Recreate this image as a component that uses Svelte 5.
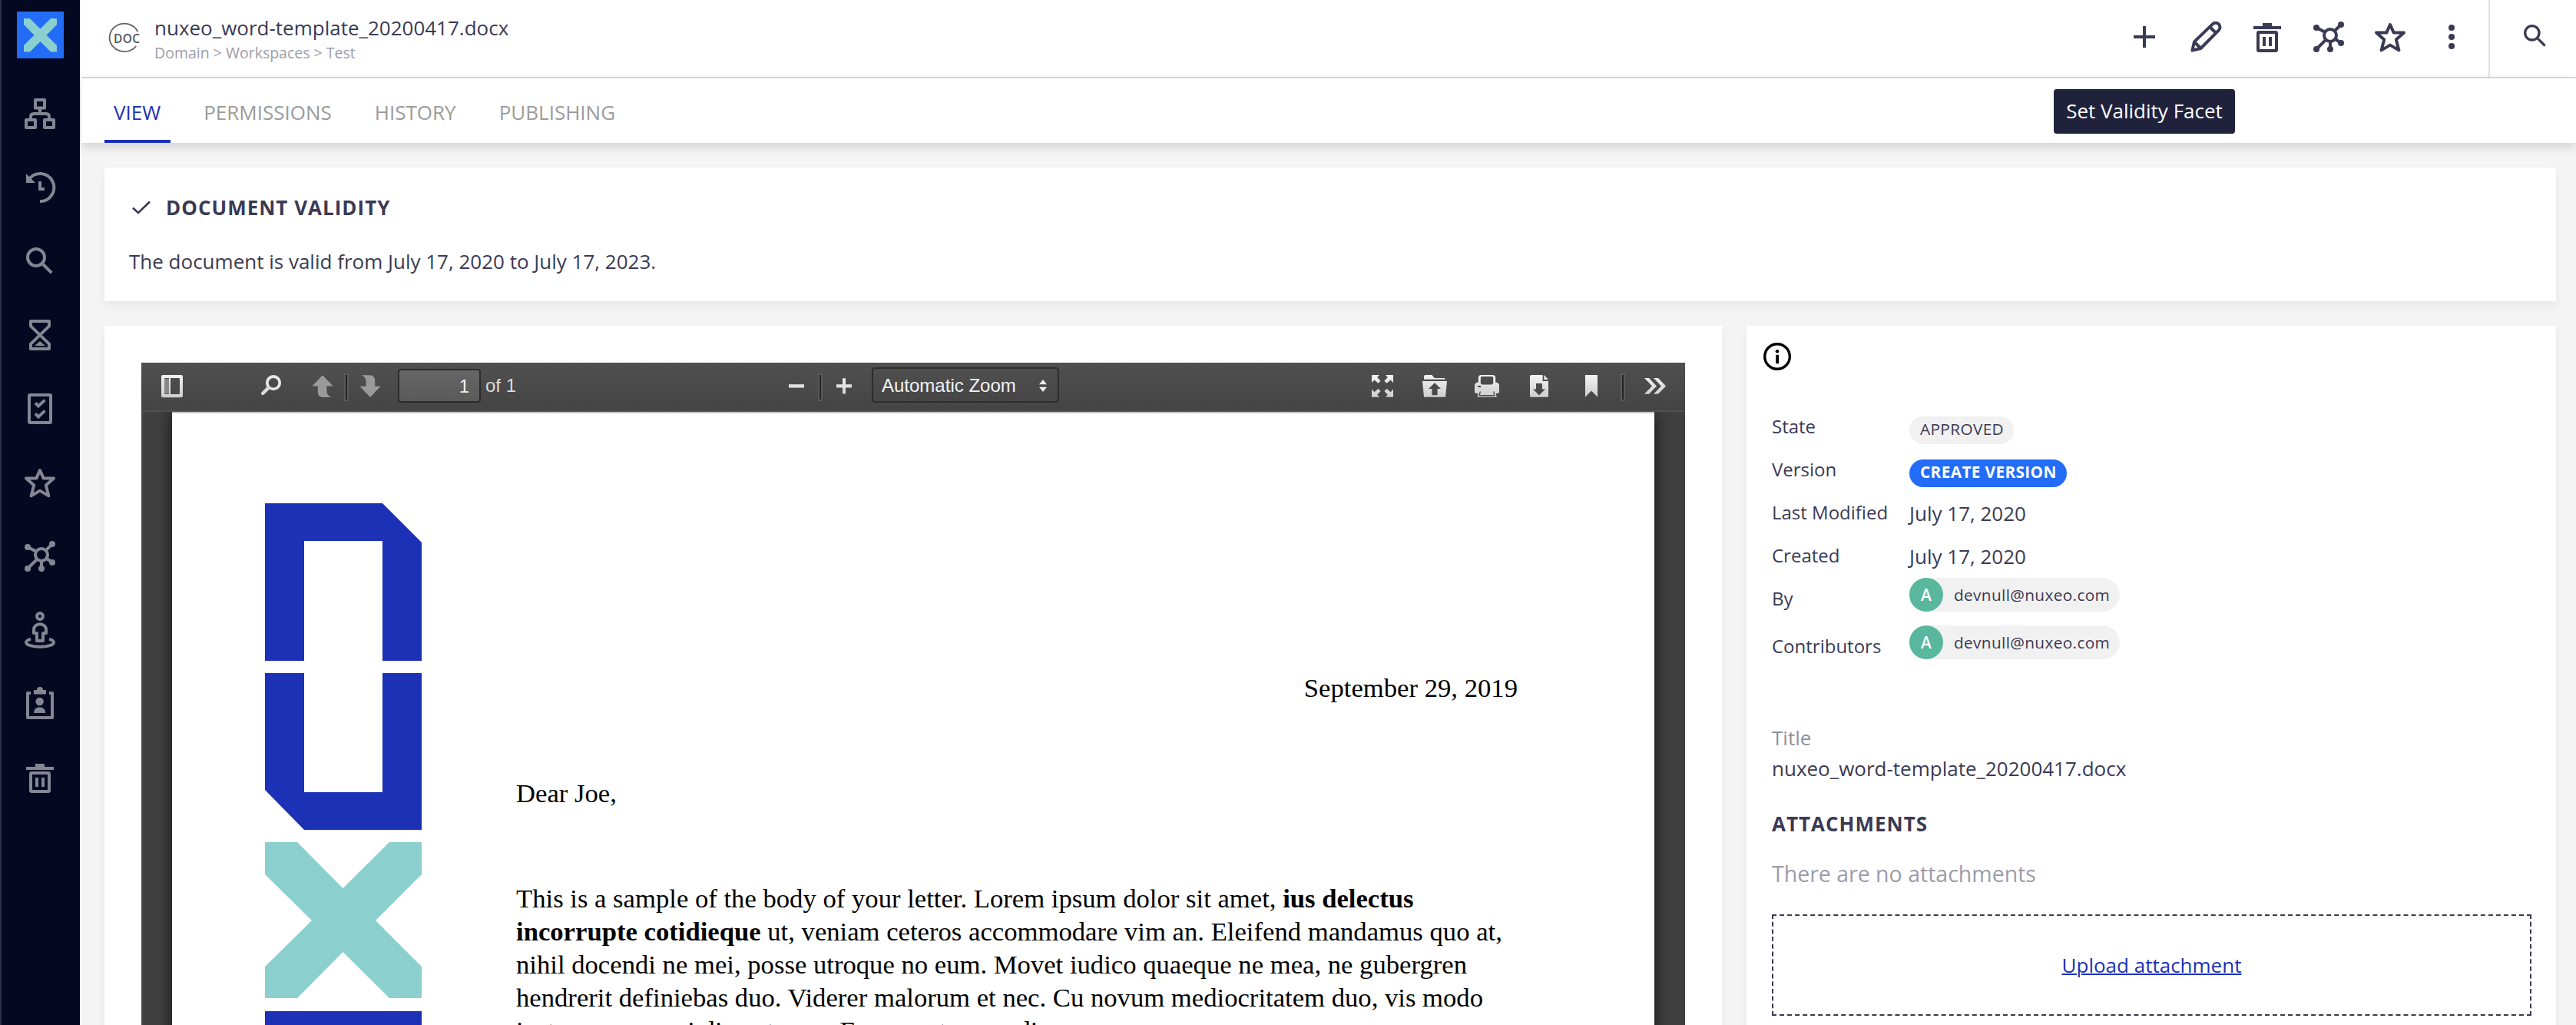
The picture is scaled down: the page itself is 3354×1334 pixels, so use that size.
<script>
  const navIcons = ['tree', 'history', 'search', 'hourglass', 'tasks', 'star', 'hub', 'person', 'badge', 'trash'];
  const actions = ['plus', 'pencil', 'trash', 'hub', 'star', 'dots'];
  const tabs = ['View', 'Permissions', 'History', 'Publishing'];
  const viewerActions = ['fullscreen', 'open', 'print', 'download', 'bookmark'];
</script>

{#snippet icon(name)}
  <svg class="icon" viewBox="0 0 24 24" fill="none" stroke="currentColor" stroke-width="2">
    {#if name === 'tree'}
      <path d="M9 3h6v5.2H9zM3 16h6v5H3zM15 16h6v5h-6zM12 8.5V12M6 16v-2q0-2 2-2h8q2 0 2 2v2" stroke-linejoin="round" />
    {:else if name === 'history'}
      <path d="M5 6.5A9 9 0 1 1 12 21M12 8v5h3" />
      <path d="M3 3v6h6z" fill="currentColor" stroke="none" />
    {:else if name === 'search'}
      <circle cx="9.5" cy="9.5" r="5.5" />
      <path d="M14 14l5.600 5.600" />
    {:else if name === 'hourglass'}
      <path d="M6 3h12v3.200L6 17.800V21h12v-3.200L6 6.200z" stroke-linejoin="round" />
      <path d="M8.500 19h7L12 16z" fill="currentColor" stroke="none" />
    {:else if name === 'tasks'}
      <rect x="5" y="3" width="14" height="18" rx="0.6" />
      <path d="M9 8.200l2 2 4.200-3.900M9 15.200l2 2 4.200-3.900" />
    {:else if name === 'star'}
      <path d="M12 4l2.300 5.200H21l-5.100 4.500 1.800 7L12 17.300l-5.700 3.400 1.800-7L3 9.200h6.700z" stroke-linejoin="round" />
    {:else if name === 'hub'}
      <circle cx="13" cy="11" r="4" />
      <path d="M4 6l5.500 2.800M20 4l-4.200 4.200M4 20l6.200-6.200M13 20v-5M20 16l-3.600-2.500" />
      <g fill="currentColor" stroke="none">
        <circle cx="4" cy="6" r="2" /><circle cx="20" cy="4" r="2" /><circle cx="4" cy="20" r="2" />
        <circle cx="13" cy="20" r="2" /><circle cx="20" cy="16" r="2" />
      </g>
    {:else if name === 'person'}
      <circle cx="12" cy="3" r="2" />
      <path d="M8 14v-2.300a4 3.600 0 0 1 8 0V14h-2v5h-4v-5z" stroke-linejoin="round" />
      <path d="M6 17.800C4 18.400 3 19.200 3 20c0 1.700 4 2.900 9 2.900s9-1.200 9-2.900c0-.8-1-1.600-3-2.200" />
    {:else if name === 'badge'}
      <path d="M6 5H4v16h16V5h-2" stroke-linejoin="round" />
      <g fill="currentColor" stroke="none">
        <path d="M8 5.800V3h2a2 2 0 0 1 4 0h2v2.800z" />
        <circle cx="11.800" cy="10.500" r="2.600" />
        <path d="M8 18c0-2.600 1.500-3.800 3.800-3.800s3.800 1.200 3.800 3.800z" />
      </g>
    {:else if name === 'trash'}
      <rect x="6" y="9" width="12" height="12" rx="0.600" />
      <path d="M3 6h18M9 4h6M10 12v6M14 12v6" />
    {:else if name === 'plus'}
      <path d="M12 5v14M5 12h14" />
    {:else if name === 'pencil'}
      <path d="M3.200 20.800l1.300-5.600L16.400 3.700a2.800 2.800 0 0 1 4 0 2.800 2.800 0 0 1 0 4L8.700 19.500zM14.600 5.500l4 4M4.500 15.200l4.200 4.300" stroke-linejoin="round" />
    {:else if name === 'dots'}
      <g fill="currentColor" stroke="none">
        <circle cx="12" cy="6" r="2" /><circle cx="12" cy="12" r="2" /><circle cx="12" cy="18" r="2" />
      </g>
    {/if}
  </svg>
{/snippet}

{#snippet tool(name)}
  <span class="tool">
    <svg viewBox="0 0 16 16" fill="url(#metal)">
      {#if name === 'sidebar'}
        <path fill-rule="evenodd" d="M2 .5h12q1 0 1 1v12.600q0 1-1 1H2q-1 0-1-1V1.500q0-1 1-1zM3.600 2.500q-.6 0-.6.6v9.300q0 .6.6.6h8.800q.6 0 .6-.6V3.100q0-.6-.6-.6z" />
        <path d="M3 3h3v9.700H3z" fill="#888" />
        <path d="M6 2.500h1v10.500H6z" />
      {:else if name === 'find'}
        <circle cx="9.500" cy="5.600" r="4.100" fill="none" stroke="#e6e6e6" stroke-width="1.900" />
        <path d="M6.300 8.800L2.600 12.500" stroke="#dcdcdc" stroke-width="2.200" stroke-linecap="round" />
      {:else if name === 'up' || name === 'down'}
        <path class:flip={name === 'down'} fill="#9a9a9a" d="M8 .6l6.800 7.100h-4.100v2.800c0 2.500 1.100 3.800 3.300 4.500H8.500c-2.700 0-3.600-1.400-3.600-4V7.700H1.200z" />
      {:else if name === 'minus'}
        <path d="M3 6.600h10v2.200H3z" />
      {:else if name === 'plus'}
        <path d="M7 2.600h2v4h4v2.200H9v4H7v-4H3V6.600h4z" />
      {:else if name === 'fullscreen'}
        <path d="M1 .5h5L4.600 2l2.200 2.400-1.600 1.500L2.700 3.800 1 5.600zM15 .5h-5L11.400 2 9.200 4.400l1.600 1.500 2.500-2.100L15 5.600zM1 14.900h5l-1.400-1.500L6.800 11 5.200 9.500l-2.500 2.100L1 9.800zM15 14.900h-5l1.400-1.500L9.200 11l1.600-1.500 2.500 2.100L15 9.800z" />
      {:else if name === 'open'}
        <path fill-rule="evenodd" d="M1 3.400V1.500q0-1 1-1h4.200l1.600 2H14q1 0 1 .9zM0 4.500h16l-1 10.400H1zM8 5.600L4 9.500h2.200v3.600q0 .5.500.5h2.600q.5 0 .5-.5V9.500H12z" />
      {:else if name === 'print'}
        <path fill-rule="evenodd" d="M2.400 5.200V2.500q0-2 2-2h7.200q2 0 2 2v2.700q2.400.2 2.400 2.300v4q0 1-1 1h-1.200l.6 2.400H1.700l.6-2.400H1q-1 0-1-1v-4q0-2.100 2.400-2.300zM4.800 1.500q-.9 0-.9.900v3.200q0 1.200 1.200 1.200h5.800q1.200 0 1.200-1.200V2.400q0-.9-.9-.9zM2 7.500v1h2v-1zM3.300 11.200l-.6 3h10.600l-.6-3-.7 0 .5 2.300H3.500l.5-2.300z" />
      {:else if name === 'download'}
        <path fill-rule="evenodd" d="M3 .5h7.300v4H14v9.600q0 .8-.8.800H2.800q-.8 0-.8-.8V1.500q0-1 1-1zM6 6v3.700H4l4 4 4-4h-2V6.500q0-.5-.5-.5z" />
        <path d="M11.200.5L14 3.500h-2.800z" />
      {:else if name === 'bookmark'}
        <path d="M4 .5h8v14.400l-4-4.100-4 4.100z" />
      {:else if name === 'more'}
        <path d="M1 2.500h3l5 5.200-5 5.200H1l5-5.200zM7 2.500h3l5 5.200-5 5.200H7l5-5.200z" />
      {/if}
    </svg>
  </span>
{/snippet}

{#snippet user()}
  <span class="user"><b>A</b><span>devnull@nuxeo.com</span></span>
{/snippet}

<svg class="defs" aria-hidden="true">
  <linearGradient id="metal" gradientUnits="userSpaceOnUse" x1="0" y1="0" x2="0" y2="16">
    <stop offset="0" stop-color="#f4f4f4" />
    <stop offset="1" stop-color="#cbcbcb" />
  </linearGradient>
</svg>

<div class="app">
  <nav>
    <div class="brand">
      <svg viewBox="0 0 61 61">
        <rect width="61" height="61" rx="1" fill="#236cf7" />
        <path d="M9 9h8l13.500 13.500L44 9h8v8L38.500 30.700 52 44v8.500h-8L30.500 39 17 52.500H9V44l13.500-13.300L9 17z" fill="#8bd0cf" />
      </svg>
    </div>
    {#each navIcons as name}
      <a class="nav-item" href="#{name}" aria-label={name}>{@render icon(name)}</a>
    {/each}
  </nav>

  <div class="main">
    <header>
      <svg class="doc-icon" viewBox="0 0 44 44">
        <path d="M38.500 14.300A19.300 18.200 0 1 0 36.300 33" fill="none" stroke="#5d6468" stroke-width="1.800" />
        <text x="7" y="29" textLength="34" lengthAdjust="spacing">DOC</text>
      </svg>
      <div class="heading">
        <div class="doc-title">nuxeo_word-template_20200417.docx</div>
        <div class="crumbs">Domain &gt; Workspaces &gt; Test</div>
      </div>
      <div class="actions">
        {#each actions as name}
          <span class="action">{@render icon(name)}{#if name === 'plus'}<span class="tooltip">Set Validity Facet</span>{/if}</span>
        {/each}
      </div>
      <div class="quick-search">{@render icon('search')}</div>
    </header>
    <div class="tabs">
      {#each tabs as tab, i}
        <span class="tab" class:active={i === 0}>{tab}</span>
      {/each}
    </div>

    <section class="card validity">
      <h2>
        <svg viewBox="0 0 26 20"><path d="M2 10.500l7 6.500L24 2.500" fill="none" stroke="currentColor" stroke-width="2.600" /></svg>
        Document validity
      </h2>
      <p>The document is valid from July 17, 2020 to July 17, 2023.</p>
    </section>

    <div class="columns">
      <section class="card preview">
        <div class="viewer">
          <div class="toolbar">
            <div class="tools-left">
              {@render tool('sidebar')}
              <span class="find">{@render tool('find')}</span>
              {@render tool('up')}<i class="sep"></i>{@render tool('down')}
              <span class="page-input">1</span>
              <span>of 1</span>
            </div>
            {@render tool('minus')}<i class="sep"></i>{@render tool('plus')}
            <span class="zoom">
              Automatic Zoom
              <svg viewBox="0 0 10 16"><path d="M0 6.300L5 0l5 6.300zM0 9.700L5 16l5-6.300z" fill="#eee" /></svg>
            </span>
            <div class="tools-right">
              {#each viewerActions as name}{@render tool(name)}{/each}
            </div>
            <i class="sep last"></i>
            {@render tool('more')}
          </div>
          <div class="pages">
            <div class="page">
              <svg class="letterhead" viewBox="0 0 204 700">
                <path fill="#1c31b5" d="M0 0h153l51 51v154h-51V49H51v156H0zM0 221h51v155h102V221h51v204H51L0 373zM0 661h204v39H0z" />
                <path fill="#8bd0cf" d="M0 441h42l59.500 60L162 441h42v42l-60 60 60 60v41h-42l-60.500-60L42 644H0v-41l61-60-61-60z" />
              </svg>
              <div class="letter">
                <p class="date">September 29, 2019</p>
                <p class="greeting">Dear Joe,</p>
                <p class="copy">
                  This is a sample of the body of your letter. Lorem ipsum dolor sit amet, <b>ius delectus</b><br />
                  <b>incorrupte cotidieque</b> ut, veniam ceteros accommodare vim an. Eleifend mandamus quo at,<br />
                  nihil docendi ne mei, posse utroque no eum. Movet iudico quaeque ne mea, ne gubergren<br />
                  hendrerit definiebas duo. Viderer malorum et nec. Cu novum mediocritatem duo, vis modo<br />
                  iusto nemore qui diceret eum. Ea sumo te nam dico.
                </p>
              </div>
            </div>
          </div>
        </div>
      </section>

      <section class="card details">
        <svg class="info" viewBox="0 0 36 36">
          <circle cx="18" cy="18" r="16.300" fill="none" stroke="#000" stroke-width="3.400" />
          <path d="M16.200 15.800h3.800v11.400h-3.800z" /><circle cx="18" cy="11.300" r="2.300" />
        </svg>
        <dl>
          <dt>State</dt><dd><span class="pill">APPROVED</span></dd>
          <dt>Version</dt><dd><span class="pill primary">CREATE VERSION</span></dd>
          <dt>Last Modified</dt><dd class="date-value">July 17, 2020</dd>
          <dt>Created</dt><dd class="date-value">July 17, 2020</dd>
          <dt>By</dt><dd>{@render user()}</dd>
          <dt>Contributors</dt><dd>{@render user()}</dd>
        </dl>
        <div class="label">Title</div>
        <div class="value">nuxeo_word-template_20200417.docx</div>
        <h3>Attachments</h3>
        <div class="empty">There are no attachments</div>
        <div class="dropzone"><a href="#upload">Upload attachment</a></div>
      </section>
    </div>
  </div>
</div>

<style>
  :global(body) { margin: 0; overflow: hidden; }
  * { box-sizing: border-box; }
  p, h2, h3, dl, dd { margin: 0; }
  svg { display: block; }
  .defs { position: absolute; width: 0; height: 0; }
  .app {
    display: flex;
    width: 3354px;
    height: 1334px;
    overflow: hidden;
    background: #f4f4f4;
    color: #3a3a54;
    font: 26px/36px "Open Sans", sans-serif;
  }

  nav { flex: none; width: 104px; background: #050821; border-left: 2px solid #2c2d43; }
  .brand { height: 100px; padding: 15px 0 0 20px; }
  .brand svg { width: 61px; height: 61px; }
  .nav-item { display: flex; width: 100px; height: 96px; align-items: center; justify-content: center; color: #858694; }
  .icon { width: 48px; height: 48px; overflow: visible; }

  .main { flex: 1; min-width: 0; display: flex; flex-direction: column; }
  header {
    flex: none;
    display: flex;
    height: 102px;
    margin-left: 2px;
    padding-left: 35px;
    background: #fff;
    border-bottom: 2px solid #dedede;
  }
  .doc-icon { width: 44px; height: 44px; margin-top: 27px; }
  .doc-icon text { font: 600 15.500px "Open Sans", sans-serif; fill: #4f565a; }
  .heading { flex: 1; padding: 18px 0 0 16px; }
  .doc-title { height: 36px; }
  .crumbs { font-size: 19.500px; line-height: 29px; color: #9d9caa; }
  .actions { display: flex; margin-right: 8px; }
  .action { position: relative; display: flex; width: 80px; height: 96px; align-items: center; justify-content: center; }
  .tooltip {
    position: absolute;
    top: 116px;
    left: 50%;
    width: 236px;
    height: 58px;
    margin-left: -118px;
    border-radius: 4px;
    background: #20213b;
    color: #fff;
    line-height: 57px;
    text-align: center;
    white-space: nowrap;
    z-index: 2;
  }
  .quick-search { width: 114px; border-left: 2px solid #e3e3e3; padding: 27px 0 0 39px; }
  .quick-search .icon, .quick-search :global(.icon) { width: 40px; height: 40px; }

  .tabs {
    flex: none;
    display: flex;
    gap: 32px;
    height: 84px;
    margin-left: 2px;
    padding-left: 30px;
    background: #fff;
    box-shadow: 0 4px 14px rgba(0, 0, 0, 0.16);
  }
  .tab { padding: 4px 12px 0; line-height: 80px; text-transform: uppercase; color: #9b9b9b; }
  .tab.active { padding-right: 13px; margin-right: -1px; color: #1c31b5; box-shadow: inset 0 -4px #1c31b5; }

  .card { background: #fff; box-shadow: 0 6px 12px rgba(0, 0, 0, 0.05); }
  .validity { flex: none; height: 174px; margin: 32px 26px 0 32px; padding: 34px 32px; }
  h2, h3 { font-size: 26px; line-height: 36px; font-weight: 700; letter-spacing: 1px; text-transform: uppercase; }
  h2 { display: flex; align-items: center; gap: 19px; margin-bottom: 34px; }
  h2 svg { width: 26px; height: 20px; margin-left: 3px; }

  .columns { display: flex; gap: 32px; margin: 32px 26px 0 32px; height: 1000px; }
  .preview { width: 2106px; padding: 48px; }
  .viewer { height: 952px; background: #404040; font: 24px/28px "Liberation Sans", Arial, sans-serif; }
  .toolbar {
    display: flex;
    height: 64px;
    padding: 0 14px 2px 0;
    align-items: center;
    background: linear-gradient(#505050, #444);
    border-bottom: 2px solid #4f4f4f;
    color: #dcdcdc;
  }
  .tools-left { display: flex; width: 828px; padding-left: 15px; align-items: center; }
  .find { margin: 0 17px 0 79px; }
  .tool { flex: none; display: flex; width: 50px; justify-content: center; padding-top: 2px; }
  .tool svg { width: 32px; height: 32px; }
  .flip { transform: rotate(180deg); transform-origin: 8px 7.800px; }
  .sep { flex: none; width: 6px; height: 36px; margin: 3px 3px 0; background: #242424; border: 2px solid #5a5a5a; }
  .sep.last { margin: 3px 14px 0 13px; }
  .page-input {
    width: 108px;
    height: 44px;
    margin: -1px 6px 0 11px;
    padding: 7px 13px 0 0;
    border: 2px solid #2b2b2b;
    border-radius: 4px;
    background: linear-gradient(#666, #5a5a5a);
    color: #f2f2f2;
    text-align: right;
  }
  .zoom {
    display: flex;
    width: 244px;
    height: 46px;
    margin: -3px 0 0 11px;
    padding: 2px 14px 0 11px;
    align-items: center;
    justify-content: space-between;
    border: 2px solid #2d2d2d;
    border-radius: 4px;
    color: #f2f2f2;
    white-space: nowrap;
  }
  .zoom svg { width: 10px; height: 16px; }
  .tools-right { display: flex; gap: 18px; margin-left: auto; }
  .pages { height: 888px; padding: 0 40px 0 38px; overflow: hidden; border-left: 2px solid #4a4a4a; }
  .page {
    display: flex;
    height: 900px;
    padding: 117px 0 0 121px;
    background: #fff;
    border-top: 2px solid #c6c5c7;
    box-shadow: 0 0 20px rgba(0, 0, 0, 0.7);
    color: #000;
    font: 34.660px/43px "Liberation Serif", serif;
  }
  .letterhead { flex: none; width: 204px; height: 700px; }
  .letter { width: 1304px; margin-left: 123px; padding-top: 219px; white-space: nowrap; }
  .date { text-align: right; }
  .greeting { margin: 94px 0; }

  .details { width: 1054px; padding: 22px 32px 0 33px; }
  .info { width: 36px; height: 36px; margin-left: -11px; }
  dl { display: grid; grid-template-columns: 179px 1fr; grid-template-rows: 56px 56px 56px 56px 62px 62px; margin-top: 45px; }
  dt { font-size: 24px; line-height: 56px; }
  dd { padding-top: 15px; }
  dd.date-value { padding-top: 1px; line-height: 56px; }
  .pill {
    display: block;
    width: fit-content;
    height: 36px;
    padding: 0 13px 0 14px;
    border-radius: 18px;
    background: #f1f1f1;
    font-size: 20.800px;
    line-height: 33px;
    letter-spacing: 0.350px;
  }
  .pill.primary { background: #236cf7; color: #fff; font-weight: 700; }
  .user {
    display: flex;
    width: 274px;
    height: 44px;
    margin-top: -14px;
    gap: 14px;
    border-radius: 22px;
    background: #f1f1f1;
    font-size: 20.800px;
    line-height: 44px;
    letter-spacing: 0.350px;
  }
  .user b { width: 44px; border-radius: 50%; background: #58b79c; color: #fff; font-weight: 600; text-align: center; }
  .label { margin-top: 67px; color: #8f8fa0; }
  .value { margin-top: 4px; }
  h3 { margin-top: 36px; }
  .empty { margin-top: 29px; font-size: 28.500px; color: #9d9caa; }
  .dropzone { height: 132px; margin-top: 35px; border: 2px dashed #3a3a54; line-height: 128px; text-align: center; }
  .dropzone a { color: #1c31b5; text-decoration-thickness: 2px; }
</style>
